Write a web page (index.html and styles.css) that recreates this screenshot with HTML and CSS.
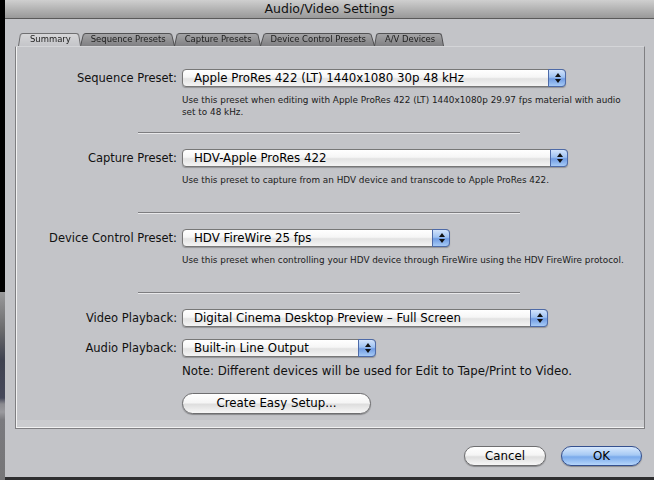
FILE: index.html
```html
<!DOCTYPE html>
<html>
	<head>
		<meta charset="utf-8">
		<title>Audio/Video Settings</title>
		<link rel="stylesheet" href="styles.css">
	</head>
	<body>
		<div class="edge"></div>
		<div class="window">
			<div class="titlebar">Audio/Video Settings</div>
			<div class="tabs">
				<div class="tab active">Summary</div>
				<div class="tab">Sequence Presets</div>
				<div class="tab">Capture Presets</div>
				<div class="tab">Device Control Presets</div>
				<div class="tab">A/V Devices</div>
			</div>
			<div class="panel">
				<div class="row first">
					<span class="label">Sequence Preset:</span>
					<div class="popup w-seq">Apple ProRes 422 (LT) 1440x1080 30p 48 kHz<span class="arrows"></span></div>
				</div>
				<p class="desc">Use this preset when editing with Apple ProRes 422 (LT) 1440x1080p 29.97 fps material with audio<br>set to 48 kHz.</p>
				<div class="sep"></div>

				<div class="row">
					<span class="label">Capture Preset:</span>
					<div class="popup w-cap">HDV-Apple ProRes 422<span class="arrows"></span></div>
				</div>
				<p class="desc">Use this preset to capture from an HDV device and transcode to Apple ProRes 422.</p>
				<div class="sep wide"></div>

				<div class="row">
					<span class="label">Device Control Preset:</span>
					<div class="popup w-dev">HDV FireWire 25 fps<span class="arrows"></span></div>
				</div>
				<p class="desc">Use this preset when controlling your HDV device through FireWire using the HDV FireWire protocol.</p>
				<div class="sep wide"></div>

				<div class="row">
					<span class="label">Video Playback:</span>
					<div class="popup w-vid">Digital Cinema Desktop Preview – Full Screen<span class="arrows"></span></div>
				</div>
				<div class="row tight">
					<span class="label">Audio Playback:</span>
					<div class="popup w-aud">Built-in Line Output<span class="arrows"></span></div>
				</div>
				<p class="note">Note: Different devices will be used for Edit to Tape/Print to Video.</p>
				<div class="btn-row">
					<button class="btn easy">Create Easy Setup...</button>
				</div>
			</div>
			<div class="footer">
				<button class="btn cancel">Cancel</button>
				<button class="btn ok">OK</button>
			</div>
		</div>
	</body>
</html>
```

FILE: styles.css
```css
*{margin:0;padding:0;box-sizing:border-box;}
body{
	width:654px;
	height:480px;
	overflow:hidden;
	display:flex;
	background:#000;
	font-family:"DejaVu Sans","Liberation Sans",sans-serif;
	color:#111;
}
.edge{
	width:5px;
	height:480px;
	background:linear-gradient(#000 0,#000 292px,#9a9a9c 292px,#6a6a6c 330px,#3f4250 360px,#45485a 398px,#8b8b90 404px,#9a9a9e 412px,#7a7a7e 420px,#767678 480px);
}
.window{
	width:649px;
	height:480px;
	background:#c3c4c8;
	border-bottom:3px solid #2e2e30;
	display:flex;
	flex-direction:column;
}
.titlebar{
	height:19px;
	line-height:18px;
	text-align:center;
	font-size:12.5px;
	color:#111;
	background:linear-gradient(#cfcfcf,#aeaeae 60%,#999);
	border-bottom:1px solid #5a5a5a;
}
.tabs{
	display:flex;
	height:14px;
	margin:13px 0 0 13px;
	position:relative;
	z-index:1;
}
.tab{
	position:relative;
	height:14px;
	line-height:14px;
	padding:0 9px 0 11px;
	font-family:"DejaVu Sans Condensed","Liberation Sans",sans-serif;
	font-size:9.4px;
	color:#1c1c1c;
	margin-right:-1px;
}
.tab:before{
	content:'';
	position:absolute;
	left:0;right:0;top:0;bottom:0;
	z-index:-1;
	background:linear-gradient(#a4a4a6,#808083);
	border:1px solid #4e4e50;
	border-bottom:none;
	border-radius:3px 3px 0 0;
	transform:perspective(20px) rotateX(6deg);
	transform-origin:bottom;
}
.tab.active{z-index:2;padding:0 10px 0 12px;}
.tab.active:before{
	background:linear-gradient(#d6d6d8,#c4c5c9);
	border-color:#6a6a6c;
}
.panel{
	margin:0 9px 0 10px;
	height:383px;
	border:1px solid #7f7f82;
	border-top-color:#d4d5d8;
	box-shadow:inset 1px 0 0 #f2f2f2,inset 0 -1px 0 #f2f2f2;
	background:linear-gradient(#c3c4c8 373px,#cbcccf 373px);
	display:flex;
	flex-direction:column;
}
.row{
	display:flex;
	align-items:center;
	margin-top:15px;
}
.row.first{margin-top:22px;}
.row.tight{margin-top:12px;}
.label{
	width:166px;
	text-align:right;
	padding-right:5px;
	font-size:11.5px;
}
.popup{
	position:relative;
	height:18px;
	line-height:16px;
	padding-left:11px;
	font-size:11.8px;
	color:#000;
	border:1px solid #777;
	border-radius:4px;
	background:linear-gradient(#fff,#f6f6f6 45%,#e2e2e2 55%,#f4f4f4);
	box-shadow:0 1px 1px rgba(0,0,0,.25);
	white-space:nowrap;
}
.arrows{
	position:absolute;
	right:-1px;top:-1px;bottom:-1px;
	width:18px;
	border:1px solid #4d6aa8;
	border-radius:0 4px 4px 0;
	background:linear-gradient(#d2e3fb,#9fc2f2 45%,#6f9be3 55%,#a7cbf6);
}
.arrows:before,.arrows:after{
	content:'';
	position:absolute;
	left:6px;
	border-left:3px solid transparent;
	border-right:3px solid transparent;
}
.arrows:before{top:3px;border-bottom:4px solid #111;}
.arrows:after{bottom:3px;border-top:4px solid #111;}
.w-seq{width:384px;}
.w-cap{width:386px;}
.w-dev{width:268px;}
.w-vid{width:366px;}
.w-aud{width:194px;}
.desc{
	margin:7px 0 0 166px;
	font-size:8.85px;
	line-height:12px;
	color:#1a1a1a;
}
.sep{
	margin:14px 0 0 122px;
	width:382px;
	height:2px;
	border-top:1px solid #7d7d80;
	border-bottom:1px solid #e8e8ea;
}
.sep.wide{margin-top:26px;}
.note{
	margin:7px 0 0 166px;
	font-size:11.8px;
	line-height:15px;
}
.btn-row{
	margin:13px 0 0 166px;
}
.btn{
	font-family:"DejaVu Sans","Liberation Sans",sans-serif;
	font-size:11.8px;
	color:#000;
	height:21px;
	border:1px solid #6e6e70;
	border-radius:11px;
	background:linear-gradient(#fff,#f5f5f5 45%,#dedede 55%,#f7f7f7);
	box-shadow:0 1px 1px rgba(0,0,0,.3);
}
.easy{width:189px;}
.footer{
	display:flex;
	justify-content:flex-end;
	gap:15px;
	margin:17px 12px 0 0;
}
.cancel{width:82px;height:20px;}
.ok{
	width:81px;
	height:20px;
	border-color:#34508f;
	background:linear-gradient(#d7e8fd,#a6c9f4 45%,#7aaaeb 55%,#b6d6fb);
}
```
